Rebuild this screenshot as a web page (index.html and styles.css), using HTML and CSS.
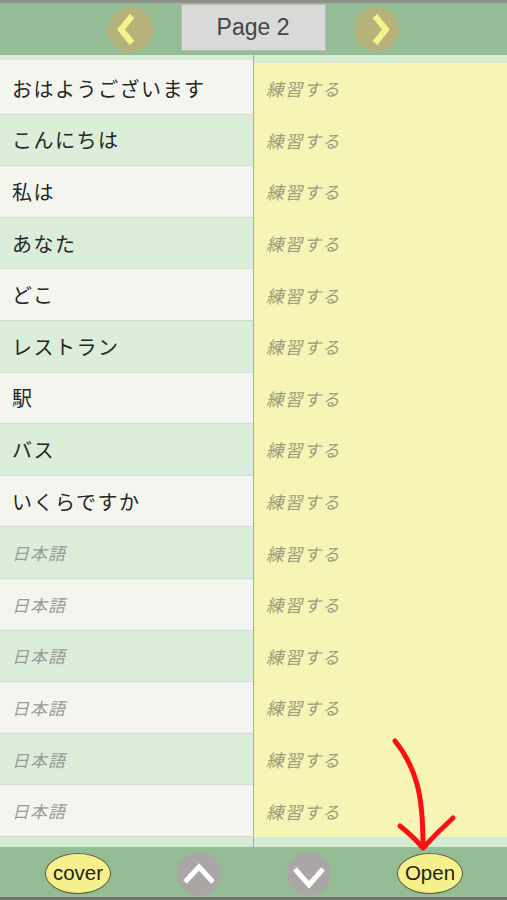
FILE: index.html
```html
<!DOCTYPE html>
<html lang="ja">
<head>
  <meta charset="UTF-8">
  <meta name="viewport" content="width=device-width, initial-scale=1.0">
  <title>Page 2</title>
  <link rel="stylesheet" href="styles.css">
</head>
<body>
  <div class="screen">
    <div class="topline"></div>
    <header class="header">
      <button class="nav-btn" aria-label="previous">
        <svg width="45" height="45" viewBox="0 0 45 45"><polyline points="24,9 13,22.5 24,36" /></svg>
      </button>
      <div class="page-box">Page 2</div>
      <button class="nav-btn" aria-label="next">
        <svg width="45" height="45" viewBox="0 0 45 45"><polyline points="21,9 32,22.5 21,36" /></svg>
      </button>
    </header>

    <div class="table">
      <div class="col col-left">
        <div class="row">おはようございます</div>
        <div class="row">こんにちは</div>
        <div class="row">私は</div>
        <div class="row">あなた</div>
        <div class="row">どこ</div>
        <div class="row">レストラン</div>
        <div class="row">駅</div>
        <div class="row">バス</div>
        <div class="row">いくらですか</div>
        <div class="row empty">日本語</div>
        <div class="row empty">日本語</div>
        <div class="row empty">日本語</div>
        <div class="row empty">日本語</div>
        <div class="row empty">日本語</div>
        <div class="row empty">日本語</div>
      </div>
      <div class="col col-right">
        <div class="answers">
          <div class="answer">練習する</div>
          <div class="answer">練習する</div>
          <div class="answer">練習する</div>
          <div class="answer">練習する</div>
          <div class="answer">練習する</div>
          <div class="answer">練習する</div>
          <div class="answer">練習する</div>
          <div class="answer">練習する</div>
          <div class="answer">練習する</div>
          <div class="answer">練習する</div>
          <div class="answer">練習する</div>
          <div class="answer">練習する</div>
          <div class="answer">練習する</div>
          <div class="answer">練習する</div>
          <div class="answer">練習する</div>
        </div>
      </div>
    </div>

    <footer class="footer">
      <button class="pill">cover</button>
      <button class="round-btn" aria-label="up">
        <svg width="44" height="44" viewBox="0 0 44 44"><polyline points="8,30 22,15 36,30" /></svg>
      </button>
      <button class="round-btn" aria-label="down">
        <svg width="44" height="44" viewBox="0 0 44 44"><polyline points="8,17 22,33 36,17" /></svg>
      </button>
      <button class="pill">Open</button>
    </footer>
    <div class="bottomline"></div>

    <!-- hand-drawn hint arrow -->
    <svg class="arrow" width="507" height="900" viewBox="0 0 507 900">
      <path d="M395 741 C 404 752, 412 766, 417 784 C 422 802, 423 822, 423 846" />
      <path d="M400 826 C 409 833, 416 840, 423 848 C 432 838, 442 828, 453 818" />
    </svg>
  </div>
</body>
</html>
```

FILE: styles.css
```css
body {
  margin: 0;
  background-color: #ffffff;
  font-family: "Noto Sans CJK JP", "Liberation Sans", sans-serif;
}

.screen {
  position: relative;
  width: 507px;
  height: 900px;
  overflow: hidden;
  display: flex;
  flex-direction: column;
}

.topline {
  height: 3px;
  background-color: #8c918c;
}

.header {
  height: 52px;
  background-color: #94bd96;
  display: flex;
  justify-content: center;
  align-items: center;
  gap: 28px;
  padding-right: 1px;
}

.nav-btn {
  width: 45px;
  height: 45px;
  padding: 0;
  border: none;
  border-radius: 50%;
  background-color: #b6b27c;
  display: flex;
}

.nav-btn polyline {
  fill: none;
  stroke: #f7f38c;
  stroke-width: 6;
  stroke-linecap: butt;
  stroke-linejoin: miter;
}

.page-box {
  width: 143px;
  height: 45px;
  margin-top: -3px;
  background-color: #dadada;
  border: 1px solid #b8bab8;
  display: flex;
  justify-content: center;
  align-items: center;
  font-family: "Liberation Sans", Arial, sans-serif;
  font-size: 23px;
  color: #454545;
}

.table {
  height: 792px;
  display: flex;
}

.col {
  background-color: #d6ecd5;
  padding: 8px 0 10px;
}

.col-left {
  width: 253px;
  padding-top: 5px;
  border-right: 1px solid #a4aca4;
}

.col-left .row:first-child {
  height: 54.6px;
}

.col-right {
  flex: 1;
}

.row {
  height: 51.6px;
  box-sizing: border-box;
  padding-left: 12px;
  display: flex;
  align-items: center;
  font-size: 20px;
  letter-spacing: 1.5px;
  color: #262626;
  background-color: #f4f5ee;
  border-bottom: 1px solid #d3dcd1;
}

.col-left .row:first-child {
  padding-top: 3px;
}

.row:nth-child(even) {
  background-color: #dbeeda;
}

.row.empty {
  font-size: 17px;
  letter-spacing: 1px;
  font-style: italic;
  color: #9a9a9a;
}

.answers {
  background-color: #f7f5b6;
}

.answer {
  height: 51.6px;
  padding-left: 12px;
  display: flex;
  align-items: center;
  font-size: 17.5px;
  letter-spacing: 1.2px;
  font-style: italic;
  color: #9c9c7c;
}

.footer {
  height: 50px;
  background-color: #94bd96;
  display: flex;
  align-items: center;
  gap: 66px;
  padding-left: 45px;
}

.pill {
  width: 66px;
  height: 41px;
  padding: 0;
  border: 1px solid #5a5a40;
  border-radius: 50%;
  background-color: #f5f08c;
  font-family: "Liberation Sans", Arial, sans-serif;
  font-size: 20.5px;
  color: #1e1e1e;
  margin-top: 2px;
}

.round-btn {
  width: 44px;
  height: 44px;
  padding: 0;
  border: none;
  border-radius: 50%;
  background-color: #aaa6a6;
  display: flex;
  margin-top: 4px;
}

.round-btn polyline {
  fill: none;
  stroke: #ffffff;
  stroke-width: 5;
  stroke-linejoin: miter;
}

.bottomline {
  height: 3px;
  background-color: #6f726f;
}

.arrow {
  position: absolute;
  left: 0;
  top: 0;
  pointer-events: none;
}

.arrow path {
  fill: none;
  stroke: #ff1010;
  stroke-width: 5;
  stroke-linecap: round;
  stroke-linejoin: round;
}
```
